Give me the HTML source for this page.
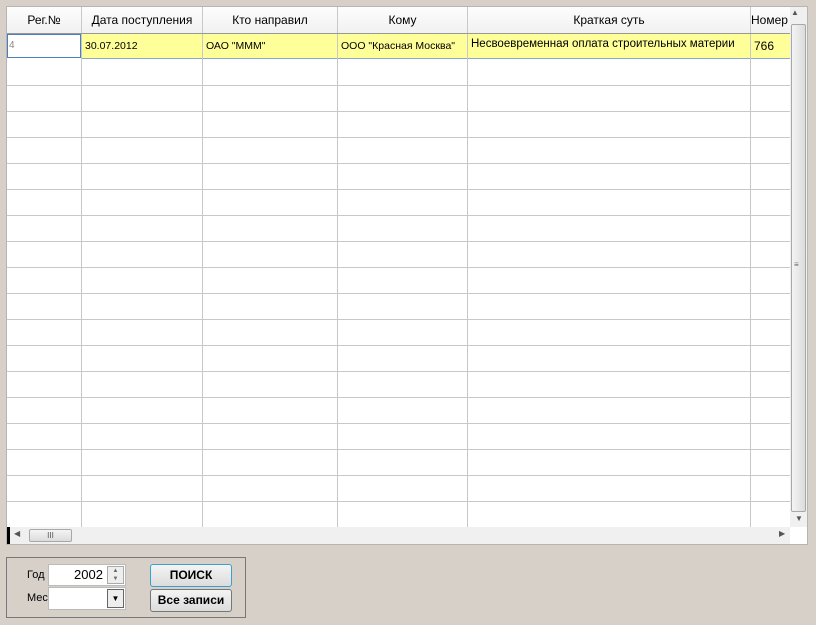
<!DOCTYPE html>
<html><head><style>
body{margin:0;width:816px;height:625px;background:#d6d0c9;font-family:"Liberation Sans",sans-serif;position:relative;overflow:hidden}
.a{position:absolute}
.box{left:6px;top:6px;width:802px;height:539px;background:#fff;border:1px solid #b8b4ae;box-sizing:border-box}
.hd{top:7px;height:26px;font-size:12px;color:#000;text-align:center;line-height:26px;background:linear-gradient(#fdfdfd,#f1f1f1)}
.vl{width:1px;background:#c8c8c8;top:7px;height:520px}
.hl{left:7px;width:783px;height:1px;background:#c8c8c8}
.cell{top:33px;height:26px;line-height:26px;font-size:10.5px}
</style></head><body>
<div class="a box"></div>
<div class="a hd" style="left:7px;width:74px">Рег.№</div>
<div class="a hd" style="left:82px;width:120px">Дата поступления</div>
<div class="a hd" style="left:203px;width:134px">Кто направил</div>
<div class="a hd" style="left:338px;width:129px">Кому</div>
<div class="a hd" style="left:468px;width:282px">Краткая суть</div>
<div class="a hd" style="left:751px;width:39px;text-align:left;overflow:hidden;white-space:nowrap">Номер</div>
<div class="a" style="left:81px;top:33px;width:709px;height:26px;background:#ffff99;border-top:1px solid #444;border-bottom:1px solid #8aa8c8;box-sizing:border-box"></div>
<div class="a" style="left:7px;top:34px;width:74px;height:24px;background:#fff;border:1px solid #4a7fc0;box-sizing:border-box"></div>
<div class="a" style="left:9px;top:34px;font-size:10px;color:#888;line-height:23px">4</div>
<div class="a cell" style="left:85px">30.07.2012</div>
<div class="a cell" style="left:206px">ОАО "МММ"</div>
<div class="a cell" style="left:341px">ООО "Красная Москва"</div>
<div class="a cell" style="left:471px;font-size:11.5px;line-height:22px;width:278px;overflow:hidden;white-space:nowrap">Несвоевременная оплата строительных материи</div>
<div class="a cell" style="left:754px;font-size:12px">766</div>
<div class="a vl" style="left:81px"></div><div class="a vl" style="left:202px"></div><div class="a vl" style="left:337px"></div><div class="a vl" style="left:467px"></div><div class="a vl" style="left:750px"></div>
<div class="a hl" style="top:33px;background:#999"></div>
<div class="a hl" style="top:85px"></div><div class="a hl" style="top:111px"></div><div class="a hl" style="top:137px"></div><div class="a hl" style="top:163px"></div><div class="a hl" style="top:189px"></div><div class="a hl" style="top:215px"></div><div class="a hl" style="top:241px"></div><div class="a hl" style="top:267px"></div><div class="a hl" style="top:293px"></div><div class="a hl" style="top:319px"></div><div class="a hl" style="top:345px"></div><div class="a hl" style="top:371px"></div><div class="a hl" style="top:397px"></div><div class="a hl" style="top:423px"></div><div class="a hl" style="top:449px"></div><div class="a hl" style="top:475px"></div><div class="a hl" style="top:501px"></div>
<div class="a" style="left:790px;top:7px;width:17px;height:520px;background:#f0f0f0"></div>
<div class="a" style="left:791px;top:8px;font-size:8px;color:#555">▲</div>
<div class="a" style="left:791px;top:24px;width:15px;height:488px;background:linear-gradient(90deg,#f4f4f4,#dcdcdc);border:1px solid #a8a8a8;border-radius:2px;box-sizing:border-box"></div>
<div class="a" style="left:794px;top:260px;font-size:8px;color:#666">≡</div>
<div class="a" style="left:795px;top:514px;font-size:8px;color:#555">▼</div>
<div class="a" style="left:7px;top:527px;width:783px;height:17px;background:#f0f0f0"></div>
<div class="a" style="left:7px;top:527px;width:3px;height:17px;background:#000"></div>
<div class="a" style="left:14px;top:529px;font-size:8px;color:#555">◀</div>
<div class="a" style="left:29px;top:529px;width:43px;height:13px;background:linear-gradient(#f4f4f4,#dcdcdc);border:1px solid #a8a8a8;border-radius:2px;box-sizing:border-box;font-size:8px;text-align:center;line-height:11px;color:#555">III</div>
<div class="a" style="left:779px;top:529px;font-size:8px;color:#555">▶</div>
<div class="a" style="left:6px;top:557px;width:240px;height:61px;border:1px solid #777;box-sizing:border-box"></div>
<div class="a" style="left:27px;top:569px;font-size:11px">Год</div>
<div class="a" style="left:48px;top:564px;width:78px;height:22px;background:#fff;border:1px solid #bbb;box-sizing:border-box"></div>
<div class="a" style="left:74px;top:567px;font-size:13px">2002</div>
<div class="a" style="left:107px;top:566px;width:17px;height:18px;background:#eee;border:1px solid #aaa;box-sizing:border-box;font-size:6px;color:#666;text-align:center;line-height:8px">▲<br>▼</div>
<div class="a" style="left:27px;top:592px;font-size:11px">Мес</div>
<div class="a" style="left:48px;top:587px;width:78px;height:23px;background:#fff;border:1px solid #bbb;box-sizing:border-box"></div>
<div class="a" style="left:107px;top:589px;width:17px;height:19px;background:#eee;border:1px solid #666;box-sizing:border-box;font-size:8px;text-align:center;line-height:18px">▼</div>
<div class="a" style="left:150px;top:564px;width:82px;height:23px;background:linear-gradient(#f4f4f4,#dcdcdc);border:1px solid #3aa0d0;border-radius:3px;box-sizing:border-box;font-size:12px;font-weight:bold;text-align:center;line-height:21px">ПОИСК</div>
<div class="a" style="left:150px;top:589px;width:82px;height:23px;background:linear-gradient(#f4f4f4,#dcdcdc);border:1px solid #777;border-radius:3px;box-sizing:border-box;font-size:12px;font-weight:bold;text-align:center;line-height:21px">Все записи</div>
</body></html>
